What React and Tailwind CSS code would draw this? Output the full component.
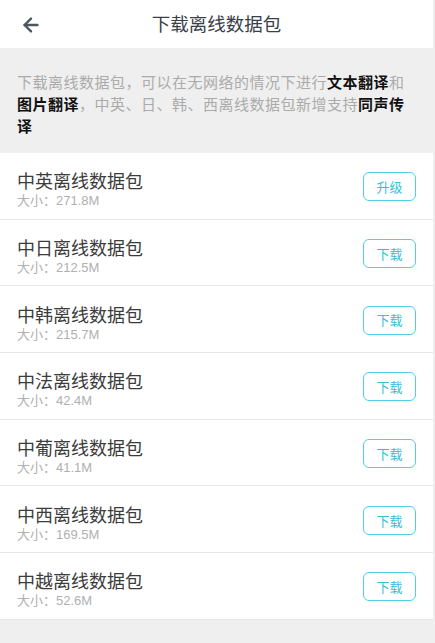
import { ArrowLeft } from "lucide-react"

const packs = [
    { name: "中英离线数据包", size: "271.8M", action: "升级" },
    { name: "中日离线数据包", size: "212.5M", action: "下载" },
    { name: "中韩离线数据包", size: "215.7M", action: "下载" },
    { name: "中法离线数据包", size: "42.4M", action: "下载" },
    { name: "中葡离线数据包", size: "41.1M", action: "下载" },
    { name: "中西离线数据包", size: "169.5M", action: "下载" },
    { name: "中越离线数据包", size: "52.6M", action: "下载" },
]

export default function App() {
    return (
        <div
            className="min-h-[643px] bg-[#efefef]"
            style={{ fontFamily: '"Noto Sans CJK SC", "Noto Sans", sans-serif' }}
        >
            <div className="w-[433px]">
                {/* top bar */}
                <div className="relative flex items-center justify-center h-[48px] bg-white">
                    <ArrowLeft
                        className="absolute left-[20px] top-[14px] text-[#4b5661]"
                        size={22}
                        strokeWidth={2.6}
                    />
                    <h1 className="text-[18.5px] text-[#3a4048]">下载离线数据包</h1>
                </div>

                {/* info */}
                <p className="pl-[17px] pr-[24px] pt-[23px] pb-[16px] text-[15px] leading-[22px] tracking-[0.5px] text-[#ababab]">
                    下载离线数据包，可以在无网络的情况下进行
                    <b className="text-[#111]">文本翻译</b>和
                    <b className="text-[#111]">图片翻译</b>
                    ，中英、日、韩、西离线数据包新增支持
                    <b className="text-[#111]">同声传译</b>
                </p>

                {/* list */}
                <div className="bg-white">
                    {packs.map((p) => (
                        <div
                            key={p.name}
                            className="flex items-center justify-between h-[66.7px] pl-[17px] pr-[17px] border-b border-[#e6e6e6]"
                        >
                            <div className="flex flex-col mt-[7px]">
                                <span className="text-[18px] leading-[24px] text-[#3c3c3c]">
                                    {p.name}
                                </span>
                                <span
                                    className="text-[13px] leading-[18px] text-[#b0b0b0]"
                                    style={{ fontFamily: '"Liberation Sans", "Noto Sans CJK SC", sans-serif' }}
                                >
                                    大小：{p.size}
                                </span>
                            </div>
                            <button className="w-[53px] h-[29px] mt-[2px] rounded-[6px] border-[1.5px] border-[#4fd0e3] text-[13px] text-[#38bfd6] bg-white">
                                {p.action}
                            </button>
                        </div>
                    ))}
                </div>
            </div>
        </div>
    )
}
